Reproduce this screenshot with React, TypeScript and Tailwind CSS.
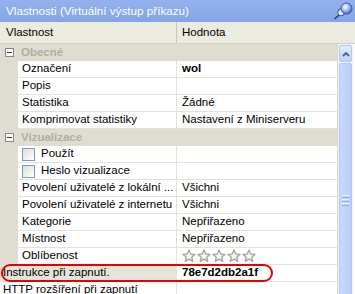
import React from 'react';

type Row =
  | { kind: 'cat'; label: string }
  | { kind: 'prop'; name: string; value?: React.ReactNode; check?: boolean; root?: boolean; selected?: boolean };

const rows: Row[] = [
  { kind: 'cat', label: 'Obecné' },
  { kind: 'prop', name: 'Označení', value: <span className="font-bold">wol</span> },
  { kind: 'prop', name: 'Popis' },
  { kind: 'prop', name: 'Statistika', value: 'Žádné' },
  { kind: 'prop', name: 'Komprimovat statistiky', value: 'Nastavení z Miniserveru' },
  { kind: 'cat', label: 'Vizualizace' },
  { kind: 'prop', name: 'Použít', check: true },
  { kind: 'prop', name: 'Heslo vizualizace', check: true },
  { kind: 'prop', name: 'Povolení uživatelé z lokální ...', value: 'Všichni' },
  { kind: 'prop', name: 'Povolení uživatelé z internetu', value: 'Všichni' },
  { kind: 'prop', name: 'Kategorie', value: 'Nepřiřazeno' },
  { kind: 'prop', name: 'Místnost', value: 'Nepřiřazeno' },
  { kind: 'prop', name: 'Oblíbenost', value: <Stars /> },
  { kind: 'prop', name: 'Instrukce při zapnutí.', value: <span className="font-bold">78e7d2db2a1f</span>, root: true, selected: true },
  { kind: 'prop', name: 'HTTP rozšíření při zapnutí', root: true },
];

function Stars() {
  return (
    <div className="flex gap-[1px] items-center">
      {[0, 1, 2, 3, 4].map((i) => (
        <svg key={i} width="14" height="14" viewBox="0 0 24 24">
          <defs>
            <linearGradient id={`sg${i}`} x1="0" y1="0" x2="0" y2="1">
              <stop offset="0" stopColor="#f4f4f2" />
              <stop offset="1" stopColor="#c9c8c2" />
            </linearGradient>
          </defs>
          <path
            d="M12 1.5l3.1 6.9 7.4.7-5.6 5 1.7 7.4L12 17.6l-6.6 3.9 1.7-7.4-5.6-5 7.4-.7z"
            fill={`url(#sg${i})`}
            stroke="#a3a29b"
            strokeWidth="2"
            strokeLinejoin="round"
          />
          <path d="M12 7l1.6 3.6 3.9.4-2.9 2.6.9 3.8L12 15.4l-3.5 2 .9-3.8-2.9-2.6 3.9-.4z" fill="#fbfbfa" />
        </svg>
      ))}
    </div>
  );
}

function MinusBox() {
  return (
    <div className="w-[9px] h-[9px] border border-[#8a8a84] bg-white flex items-center justify-center">
      <div className="w-[5px] h-px bg-[#3c3c3c]" />
    </div>
  );
}

function PinIcon() {
  return (
    <svg width="20" height="18" viewBox="0 0 20 18">
      <defs>
        <radialGradient id="pin" cx="0.4" cy="0.35" r="0.7">
          <stop offset="0" stopColor="#ffffff" />
          <stop offset="0.45" stopColor="#a9c3f2" />
          <stop offset="1" stopColor="#2f5db8" />
        </radialGradient>
      </defs>
      <path d="M2 16.5l6-5" stroke="#1d3f86" strokeWidth="1.6" strokeLinecap="round" />
      <ellipse cx="8.5" cy="10" rx="3.2" ry="4" fill="#e9f0fd" stroke="#2b56ad" strokeWidth="1" transform="rotate(40 8.5 10)" />
      <circle cx="13.5" cy="6.5" r="5.5" fill="url(#pin)" stroke="#2b56ad" strokeWidth="1" />
    </svg>
  );
}

export default function App() {
  return (
    <div
      className="relative w-[355px] h-[294px] overflow-hidden bg-white text-[11.5px] text-black"
      style={{ fontFamily: '"Liberation Sans", Arial, sans-serif' }}
    >
      {/* Title */}
      <div className="h-[22px] flex items-center justify-between pl-[6px] pr-[2px] bg-gradient-to-b from-[#94b1ec] to-[#84a4e5] text-white text-[11.7px]">
        <span>Vlastnosti (Virtuální výstup příkazu)</span>
        <PinIcon />
      </div>

      {/* Header */}
      <div className="h-[22px] flex bg-[#ecebdf] border-b border-[#d2d0c2]">
        <div className="w-[177px] flex items-center pl-[6px] border-r border-[#c9c7b8]">Vlastnost</div>
        <div className="flex items-center pl-[5px]">Hodnota</div>
      </div>

      {/* Body */}
      <div className="flex">
        <div className="w-[338px] border-r border-[#d8d6ca]">
          {rows.map((r, i) =>
            r.kind === 'cat' ? (
              <div key={i} className="h-[17px] flex items-center bg-[#dfddd1]">
                <div className="w-[18px] flex justify-center">
                  <MinusBox />
                </div>
                <span className="pl-[3px] font-bold text-[#b0ae9f]">{r.label}</span>
              </div>
            ) : (
              <div key={i} className="h-[17px] flex">
                {!r.root && <div className="w-[18px] bg-[#dfddd1] shrink-0" />}
                <div
                  className={`${r.root ? 'w-[177px] pl-[3px]' : 'w-[159px] pl-[4px]'} shrink-0 flex items-center gap-[6px] border-b border-r border-[#e4e2d6] whitespace-nowrap overflow-hidden ${
                    r.selected ? 'bg-[#e6e4da]' : 'bg-white'
                  }`}
                >
                  {r.check && (
                    <div className="w-[13px] h-[13px] border border-[#7f9db9] bg-gradient-to-br from-[#dcdcd6] to-white shrink-0" />
                  )}
                  <span>{r.name}</span>
                </div>
                <div className="flex-1 flex items-center pl-[5px] border-b border-[#e4e2d6] whitespace-nowrap overflow-hidden">
                  {r.value}
                </div>
              </div>
            )
          )}
        </div>

        {/* Scrollbar */}
        <div className="w-[15px] flex flex-col bg-[#f4f3ee]">
          <div className="h-[17px] m-[1px] rounded-[2px] border border-[#b4c8f6] bg-gradient-to-b from-[#e3ebfe] to-[#c0d2fa] flex items-center justify-center">
            <svg width="8" height="6" viewBox="0 0 8 6">
              <path d="M1 5l3-3 3 3" fill="none" stroke="#4d6185" strokeWidth="1.8" />
            </svg>
          </div>
          <div className="h-[260px] mx-[1px] rounded-[2px] border border-[#b1c6f5] bg-gradient-to-r from-[#c9d8fc] to-[#b9cefa] flex flex-col items-center justify-center gap-[1px] pt-[14px]">
            <div className="w-[7px] h-px bg-[#eef3fe]" />
            <div className="w-[7px] h-px bg-[#8fadeb]" />
            <div className="w-[7px] h-px bg-[#eef3fe]" />
            <div className="w-[7px] h-px bg-[#8fadeb]" />
            <div className="w-[7px] h-px bg-[#eef3fe]" />
            <div className="w-[7px] h-px bg-[#8fadeb]" />
          </div>
        </div>
        <div className="w-[2px] bg-white" />
      </div>

      {/* Highlight ring */}
      <div className="absolute left-[1px] top-[264px] w-[272px] h-[18px] border-2 border-[#e60000] rounded-[9px]" />
    </div>
  );
}
